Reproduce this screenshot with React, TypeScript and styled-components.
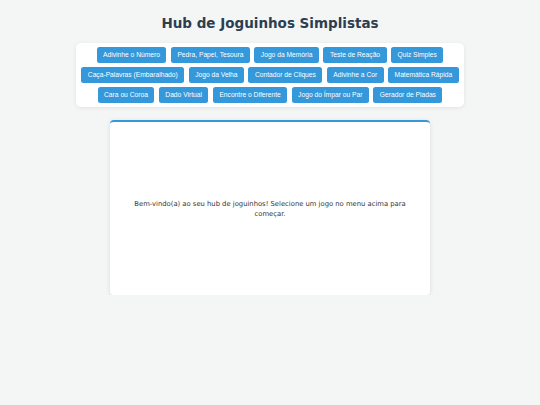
import React from "react";
import styled, { createGlobalStyle } from "styled-components";

const Global = createGlobalStyle`
  html, body { margin: 0; padding: 0; }
  body {
    background: #f4f6f6;
    font-family: "DejaVu Sans", Verdana, sans-serif;
    color: #333;
  }
`;

const Page = styled.div`
  display: flex;
  flex-direction: column;
  align-items: center;
  padding-top: 16.2px;
`;

const Title = styled.h1`
  margin: 0 0 11px;
  font-size: 13.5px;
  line-height: 15.6px;
  font-weight: bold;
  color: #2c3e50;
`;

const Nav = styled.nav`
  box-sizing: border-box;
  width: 388px;
  background: #fff;
  border-radius: 5px;
  box-shadow: 0 1px 4px rgba(0, 0, 0, 0.08);
  padding: 4.3px 4.6px;
  display: flex;
  flex-wrap: wrap;
  justify-content: center;
  gap: 4px 4.4px;
`;

const GameButton = styled.button`
  font-family: "Liberation Sans", Arial, sans-serif;
  font-size: 6.7px;
  line-height: 8px;
  padding: 4px 6.5px;
  border: none;
  border-radius: 2.5px;
  background: #3498db;
  color: #fff;
  cursor: pointer;
  white-space: nowrap;
`;

const Content = styled.main`
  box-sizing: border-box;
  width: 320px;
  height: 175px;
  margin-top: 12.7px;
  background: #fff;
  border-top: 2.7px solid #3498db;
  border-radius: 4px;
  box-shadow: 0 1px 5px rgba(0, 0, 0, 0.1);
  padding: 0 13.3px;
  display: flex;
  align-items: center;
  justify-content: center;
  text-align: center;
`;

const Welcome = styled.p`
  margin: 0;
  font-size: 6.8px;
  line-height: 10px;
  color: #333;
`;

const games = [
  "Adivinhe o Número",
  "Pedra, Papel, Tesoura",
  "Jogo da Memória",
  "Teste de Reação",
  "Quiz Simples",
  "Caça-Palavras (Embaralhado)",
  "Jogo da Velha",
  "Contador de Cliques",
  "Adivinhe a Cor",
  "Matemática Rápida",
  "Cara ou Coroa",
  "Dado Virtual",
  "Encontre o Diferente",
  "Jogo do Ímpar ou Par",
  "Gerador de Piadas",
];

export default function App() {
  return (
    <>
      <Global />
      <Page>
        <Title>Hub de Joguinhos Simplistas</Title>
        <Nav>
          {games.map((g) => (
            <GameButton key={g}>{g}</GameButton>
          ))}
        </Nav>
        <Content>
          <Welcome>
            Bem-vindo(a) ao seu hub de joguinhos! Selecione um jogo no menu acima para começar.
          </Welcome>
        </Content>
      </Page>
    </>
  );
}
